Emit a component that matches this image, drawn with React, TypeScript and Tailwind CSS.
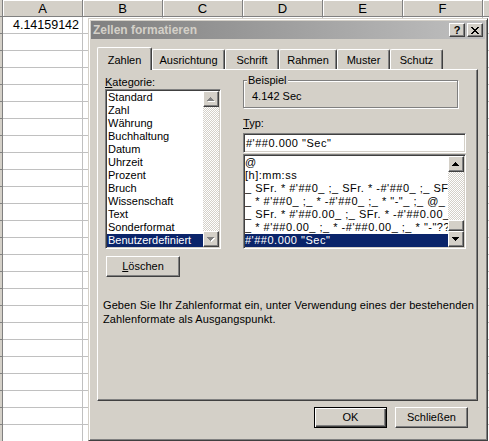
import React from "react";

// win2000 bevels
const raised =
  "border border-t-white border-l-white border-r-[#404040] border-b-[#404040] shadow-[inset_-1px_-1px_0_#808080]";
const sunken =
  "border border-t-[#808080] border-l-[#808080] border-r-white border-b-white shadow-[inset_1px_1px_0_#404040,inset_-1px_-1px_0_#d4d0c8]";

const columns = ["A", "B", "C", "D", "E", "F", "G"];
const rowCount = 26;

const categories = [
  "Standard",
  "Zahl",
  "Währung",
  "Buchhaltung",
  "Datum",
  "Uhrzeit",
  "Prozent",
  "Bruch",
  "Wissenschaft",
  "Text",
  "Sonderformat",
  "Benutzerdefiniert"
];

const formats = [
  "@",
  "[h]:mm:ss",
  `_ SFr. * #'##0_ ;_ SFr. * -#'##0_ ;_ SFr. * "-"_ ;_ @_ `,
  `_ * #'##0_ ;_ * -#'##0_ ;_ * "-"_ ;_ @_ `,
  `_ SFr. * #'##0.00_ ;_ SFr. * -#'##0.00_ ;_ SFr. * "-"??_ ;_ @_ `,
  `_ * #'##0.00_ ;_ * -#'##0.00_ ;_ * "-"??_ ;_ @_ `,
  `#'##0.000 "Sec"`
];

const tabs = [
  { label: "Zahlen", w: "w-[55px]" },
  { label: "Ausrichtung", w: "w-[73px]" },
  { label: "Schrift", w: "w-[54px]" },
  { label: "Rahmen", w: "w-[58px]" },
  { label: "Muster", w: "w-[53px]" },
  { label: "Schutz", w: "w-[53px]" }
];

function Arrow({ dir, disabled }: { dir: "up" | "down"; disabled?: boolean }) {
  const rows =
    dir === "up"
      ? [[6, 5, 1], [5, 6, 3], [4, 7, 5], [3, 8, 7]]
      : [[3, 5, 7], [4, 6, 5], [5, 7, 3], [6, 8, 1]];
  return (
    <div className={`w-[16px] h-[16px] shrink-0 bg-[#d4d0c8] ${raised}`}>
      <svg width="14" height="14" viewBox="0 0 14 14" shapeRendering="crispEdges" className="block">
        {disabled &&
          rows.map(([x, y, w]) => (
            <rect key={"s" + y} x={x + 1} y={y + 1} width={w} height={1} fill="#ffffff" />
          ))}
        {rows.map(([x, y, w]) => (
          <rect key={y} x={x} y={y} width={w} height={1} fill={disabled ? "#808080" : "#000000"} />
        ))}
      </svg>
    </div>
  );
}

function Scrollbar({ disabled, thumb }: { disabled?: boolean; thumb?: boolean }) {
  return (
    <div className="w-[16px] shrink-0 flex flex-col">
      <Arrow dir="up" disabled={disabled} />
      <div className="flex-1 flex flex-col justify-end bg-[image:repeating-conic-gradient(#d4d0c8_0_25%,#ffffff_0_50%)] bg-[length:2px_2px]">
        {thumb && <div className={`h-[11px] bg-[#d4d0c8] ${raised}`} />}
      </div>
      <Arrow dir="down" disabled={disabled} />
    </div>
  );
}

function Button({ children, isDefault, className = "" }: { children: React.ReactNode; isDefault?: boolean; className?: string }) {
  const bevel = isDefault
    ? "border border-black shadow-[inset_1px_1px_0_#ffffff,inset_-1px_-1px_0_#404040,inset_-2px_-2px_0_#808080]"
    : raised;
  return (
    <div className={`h-[21px] flex items-center justify-center bg-[#d4d0c8] text-[11px] leading-[13px] ${bevel} ${className}`}>
      {children}
    </div>
  );
}

function CaptionButton({ children }: { children: React.ReactNode }) {
  return (
    <div className={`w-[16px] h-[14px] bg-[#d4d0c8] ${raised} flex items-center justify-center`}>
      {children}
    </div>
  );
}

function CloseGlyph() {
  const cells = [
    [0, 0, 2], [6, 0, 2],
    [1, 1, 2], [5, 1, 2],
    [2, 2, 4],
    [3, 3, 2],
    [2, 4, 4],
    [1, 5, 2], [5, 5, 2],
    [0, 6, 2], [6, 6, 2]
  ];
  return (
    <svg width="8" height="7" viewBox="0 0 8 7" shapeRendering="crispEdges" className="block">
      {cells.map(([x, y, w], i) => (
        <rect key={i} x={x} y={y} width={w} height={1} fill="#000000" />
      ))}
    </svg>
  );
}

function Dialog() {
  return (
    <div
      className={`absolute left-[88px] top-[18px] w-[400px] h-[423px] bg-[#d4d0c8] p-[2px] flex flex-col border border-t-[#d4d0c8] border-l-[#d4d0c8] border-r-[#404040] border-b-[#404040] shadow-[inset_1px_1px_0_#ffffff,inset_-1px_-1px_0_#808080]`}
    >
      <div className="h-[18px] shrink-0 flex items-center bg-linear-to-r from-[#808080] to-[#c0c0c0]">
        <span className="pl-[2px] text-[12px] font-bold leading-[14px] text-[#d4d0c8]">Zellen formatieren</span>
        <div className="ml-auto mr-[2px] flex gap-[2px]">
          <CaptionButton>
            <span className="text-[11px] font-bold leading-[12px]">?</span>
          </CaptionButton>
          <CaptionButton>
            <CloseGlyph />
          </CaptionButton>
        </div>
      </div>

      <div className="mt-[8px] ml-[6px] h-[22px] flex items-end">
        {tabs.map((t, i) =>
          i === 0 ? (
            <div
              key={t.label}
              className={`${t.w} h-[23px] -mb-[1px] relative z-10 bg-[#d4d0c8] rounded-t-[2px] border-t border-l border-t-white border-l-white border-r border-r-[#404040] shadow-[inset_-1px_0_0_#808080] pt-[6px] text-center text-[11px] leading-[13px]`}
            >
              {t.label}
            </div>
          ) : (
            <div
              key={t.label}
              className={`${t.w} h-[20px] bg-[#d4d0c8] rounded-t-[2px] border-t border-l border-t-white border-l-white border-r border-r-[#404040] shadow-[inset_-1px_0_0_#808080] pt-[4px] text-center text-[11px] leading-[13px]`}
            >
              {t.label}
            </div>
          )
        )}
      </div>

      <div
        className={`ml-[6px] w-[381px] h-[332px] shrink-0 pt-[6px] flex flex-col border border-t-white border-l-white border-r-[#404040] border-b-[#404040] shadow-[inset_-1px_-1px_0_#808080] text-[11px] leading-[13px]`}
      >
        <div className="flex pl-[7px] gap-[22px]">
          <div className="w-[116px] flex flex-col">
            <div className="h-[13px]">
              <span className="underline">K</span>ategorie:
            </div>
            <div className={`w-[116px] h-[160px] bg-white p-[1px] flex ${sunken}`}>
              <div className="flex-1 flex flex-col overflow-hidden">
                {categories.map((c, i) => (
                  <div
                    key={c}
                    className={`h-[13px] pl-[1px] whitespace-nowrap ${
                      i === categories.length - 1 ? "bg-[#0a246a] text-white" : ""
                    }`}
                  >
                    {c}
                  </div>
                ))}
              </div>
              <Scrollbar disabled />
            </div>
          </div>

          <div className="w-[223px] flex flex-col">
            <div className="relative mt-[4px] w-[215px] h-[28px] border border-[#808080] shadow-[1px_1px_0_#ffffff,inset_1px_1px_0_#ffffff] pl-[8px] pt-[9px]">
              <span className="absolute -top-[7px] left-[3px] px-[1px] bg-[#d4d0c8]">Beispiel</span>
              4.142 Sec
            </div>
            <div className="mt-[9px] h-[13px]">
              <span className="underline">T</span>yp:
            </div>
            <div className={`mt-[3px] h-[20px] bg-white pl-[2px] flex items-center whitespace-pre tracking-[0.5px] ${sunken}`}>
              {`#'##0.000 "Sec"`}
            </div>
            <div className={`mt-[1px] h-[95px] bg-white p-[1px] flex ${sunken}`}>
              <div className="flex-1 flex flex-col overflow-hidden tracking-[0.5px]">
                {formats.map((f, i) => (
                  <div
                    key={i}
                    className={`h-[13px] shrink-0 whitespace-pre overflow-hidden ${
                      i === formats.length - 1 ? "bg-[#0a246a] text-white" : ""
                    }`}
                  >
                    {f}
                  </div>
                ))}
              </div>
              <Scrollbar thumb />
            </div>
          </div>
        </div>

        <div className="mt-[7px] pl-[8px]">
          <Button className="w-[74px]">
            <span>
              <span className="underline">L</span>öschen
            </span>
          </Button>
        </div>

        <div className="mt-[21px] pl-[5px] leading-[14px] whitespace-nowrap tracking-[0.1px]">
          Geben Sie Ihr Zahlenformat ein, unter Verwendung eines der bestehenden
          <br />
          Zahlenformate als Ausgangspunkt.
        </div>
      </div>

      <div className="mt-[6px] pr-[17px] flex justify-end gap-[8px]">
        <Button isDefault className="w-[73px]">
          OK
        </Button>
        <Button className="w-[73px]">Schließen</Button>
      </div>
    </div>
  );
}

export default function App() {
  return (
    <div className="relative w-[489px] h-[441px] overflow-hidden bg-white text-black font-['Liberation_Sans',Arial,sans-serif]">
      <div className="flex h-[17px]">
        <div className="w-[3px] shrink-0 bg-[#d4d0c8] border-r border-b border-[#808080]" />
        {columns.map((c) => (
          <div
            key={c}
            className="w-[80px] shrink-0 bg-[#d4d0c8] border-r border-b border-[#808080] shadow-[inset_1px_1px_0_#ffffff] pt-[1px] text-center text-[13px] leading-[15px]"
          >
            {c}
          </div>
        ))}
      </div>
      {Array.from({ length: rowCount }).map((_, r) => (
        <div key={r} className="flex h-[17px]">
          <div className="w-[3px] shrink-0 bg-[#d4d0c8] border-r border-b border-[#808080]" />
          {columns.map((c) => (
            <div
              key={c}
              className="w-[80px] shrink-0 border-r border-b border-[#c0c0c0] pr-[3px] text-right text-[12.5px] leading-[16px]"
            >
              {r === 0 && c === "A" ? "4.14159142" : ""}
            </div>
          ))}
        </div>
      ))}
      <Dialog />
    </div>
  );
}
